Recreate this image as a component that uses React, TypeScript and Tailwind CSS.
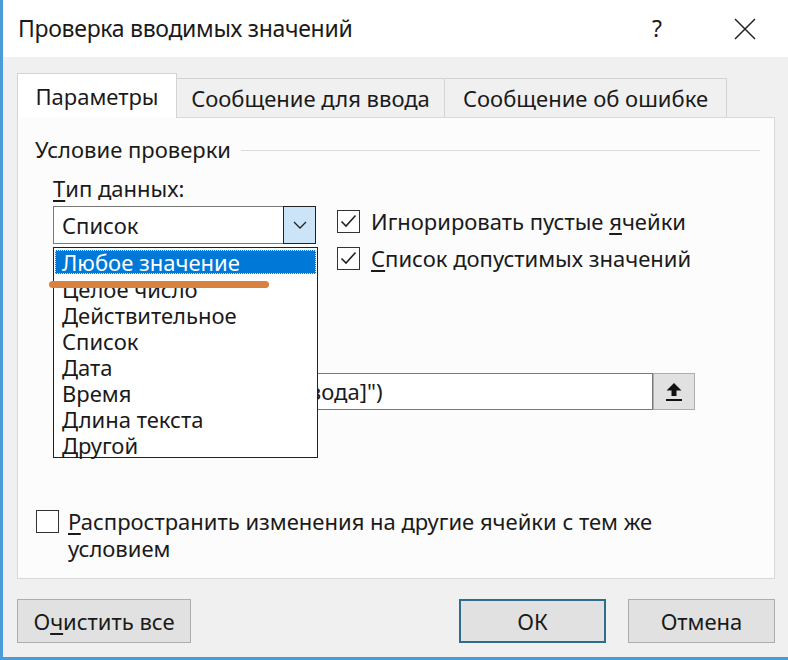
import React from "react";

const font = { fontFamily: '"Noto Sans", "Open Sans", sans-serif' };

const items = [
  "Любое значение",
  "Целое число",
  "Действительное",
  "Список",
  "Дата",
  "Время",
  "Длина текста",
  "Другой",
];

function CheckBox({ checked }: { checked: boolean }) {
  return (
    <div className="w-[23px] h-[23px] border-[1.5px] border-[#333] bg-white flex items-center justify-center shrink-0">
      {checked && (
        <svg width="17" height="14" viewBox="0 0 17 14" fill="none">
          <path d="M1.5 7.5 L6 12 L15.5 1.5" stroke="#222" strokeWidth="1.6" />
        </svg>
      )}
    </div>
  );
}

export default function App() {
  return (
    <div
      className="relative w-[788px] h-[660px] bg-[#f0f0f0] border-l-[3px] border-b-[3px] border-[#4a9bd8] flex flex-col text-[#1a1a1a] overflow-hidden"
      style={font}
    >
      {/* title bar */}
      <div className="h-[57px] bg-white flex items-center pl-[15px] pr-[32px] shrink-0">
        <span className="text-[23px] tracking-[-0.3px]">Проверка вводимых значений</span>
        <span className="ml-auto text-[23px] mr-[72px]">?</span>
        <svg width="22" height="22" viewBox="0 0 22 22">
          <path d="M1 1 L21 21 M21 1 L1 21" stroke="#222" strokeWidth="1.5" />
        </svg>
      </div>

      <div className="flex-1 flex flex-col pl-[14px] pr-[13px]">
        {/* tabs */}
        <div className="flex items-end mt-[15px] h-[45px]">
          <div className="w-[160px] h-[45px] bg-white border border-b-0 border-[#d4d4d4] flex items-center justify-center text-[22px] -mb-px relative z-10">
            Параметры
          </div>
          <div className="w-[268px] h-[39px] bg-[#f0f0f0] border-t border-r border-[#d4d4d4] flex items-center justify-center text-[22px]">
            Сообщение для ввода
          </div>
          <div className="w-[282px] h-[39px] bg-[#f0f0f0] border-t border-r border-[#d4d4d4] flex items-center justify-center text-[22px]">
            Сообщение об ошибке
          </div>
        </div>

        {/* panel */}
        <div className="relative h-[462px] bg-[#fcfcfc] border border-[#d9d9d9] flex flex-col pl-[17px] pr-[14px]">
          <div className="flex items-center mt-[17px] h-[28px]">
            <span className="text-[22px]">Условие проверки</span>
            <div className="flex-1 h-px bg-[#dcdcdc] ml-[10px] mt-[3px]" />
          </div>

          <div className="pl-[18px] mt-[11px] text-[22px] h-[28px] flex items-center">
            <span className="underline underline-offset-[3px]">Т</span>ип данных:
          </div>

          <div className="flex items-start mt-[4px] pl-[18px] gap-[21px] h-[65px]">
            <div className="w-[263px] h-[38px] bg-white border border-[#7a7a7a] flex">
              <div className="flex-1 flex items-center pl-[8px] text-[22px]">Список</div>
              <div className="w-[33px] -my-px -mr-px bg-[#cce4f7] border border-[#222] flex items-center justify-center">
                <svg width="14" height="8" viewBox="0 0 14 8" fill="none">
                  <path d="M1 1 L7 7 L13 1" stroke="#222" strokeWidth="1.3" />
                </svg>
              </div>
            </div>
            <div className="flex flex-col gap-[11px] pt-[2px]">
              <div className="flex items-center h-[26px] gap-[11px] text-[22px]">
                <CheckBox checked />
                <span>
                  Игнорировать пустые <span className="underline underline-offset-[3px]">я</span>чейки
                </span>
              </div>
              <div className="flex items-center h-[26px] gap-[11px] text-[22px]">
                <CheckBox checked />
                <span>
                  <span className="underline underline-offset-[3px]">С</span>писок допустимых значений
                </span>
              </div>
            </div>
          </div>

          {/* source field */}
          <div className="flex mt-[102px] pl-[18px]">
            <div className="w-[600px] h-[37px] bg-white border border-[#7a7a7a] flex items-center pl-[8px] text-[22px] overflow-hidden whitespace-nowrap">
              =ДВССЫЛ("Табл1[Тип ввода]")
            </div>
            <div className="w-[42px] h-[37px] bg-[#e1e1e1] border border-[#adadad] flex items-center justify-center">
              <svg width="18" height="20" viewBox="0 0 18 20">
                <path d="M9 1 L1.5 8.5 H6.5 V14 H11.5 V8.5 H16.5 Z" fill="#111" />
                <rect x="1" y="17" width="16" height="2" fill="#111" />
              </svg>
            </div>
          </div>

          <div className="flex items-start gap-[9px] mt-[100px] pl-[1px]">
            <CheckBox checked={false} />
            <div className="text-[22px] leading-[27px] -mt-[2px]">
              <span className="underline underline-offset-[3px]">Р</span>аспространить изменения на другие ячейки с тем же
              <br />
              условием
            </div>
          </div>

          {/* open dropdown list */}
          <div className="absolute left-[35px] top-[129px] w-[265px] h-[211px] bg-white border border-[#222] pt-[2px] px-[1px] z-20">
            {items.map((it, i) => (
              <div
                key={it}
                className={
                  i === 0
                    ? "h-[24px] bg-[#0078d7] text-white border border-dotted border-[#f4e9a0] flex items-center pl-[6px] text-[22px] mb-[2px]"
                    : "h-[26px] flex items-center pl-[7px] text-[22px]"
                }
              >
                {it}
              </div>
            ))}
          </div>
          <div className="absolute left-[31px] top-[163px] w-[220px] h-[7px] rounded-full bg-[#d9823f] z-30" />
        </div>

        {/* buttons */}
        <div className="flex items-center mt-[20px]">
          <button className="w-[174px] h-[44px] bg-[#e1e1e1] border border-[#adadad] text-[22px]">
            О<span className="underline underline-offset-[3px]">ч</span>истить все
          </button>
          <button className="ml-auto w-[147px] h-[44px] bg-[#e1e1e1] border-2 border-[#2b6f8e] text-[22px]">
            ОК
          </button>
          <button className="ml-[22px] w-[147px] h-[44px] bg-[#e1e1e1] border border-[#adadad] text-[22px]">
            Отмена
          </button>
        </div>
      </div>
    </div>
  );
}
